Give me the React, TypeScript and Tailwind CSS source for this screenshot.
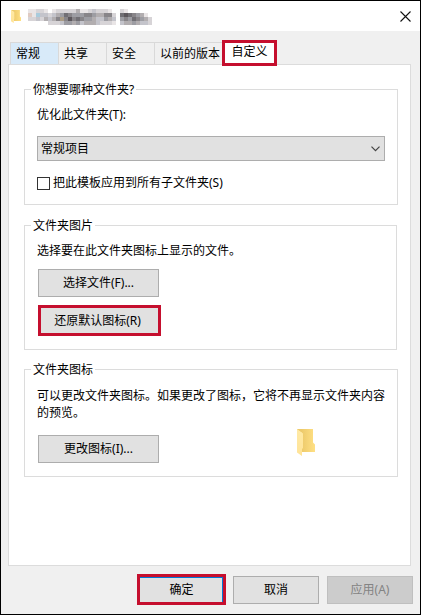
import clsx from "clsx"
import type { ReactNode } from "react"

const tabs = [
  { label: "常规", className: "w-[48px] bg-[#d8eaf9]" },
  { label: "共享", className: "w-[48px]" },
  { label: "安全", className: "w-[48px]" },
  { label: "以前的版本", className: "w-[68px]" },
]

// Pixelated folder name, one digit per block: 0 is white, 9 the darkest
const titleMosaic = [
  "1122101222224112322210021000000",
  "3133323457655566544662078765410",
  "2232434656867655433543056576542",
  "0000022235545344432221034454332",
]

const shades = [
  "#ffffff",
  "#e9e5e6",
  "#d7d4d7",
  "#c4c4cb",
  "#b2aeb0",
  "#9d9da3",
  "#888589",
  "#716f74",
  "#5c575c",
  "#494449",
]

function TitleMosaic() {
  return (
    <svg width="124" height="16" viewBox="0 0 31 4" shapeRendering="crispEdges" aria-hidden="true">
      {titleMosaic.map((row, y) =>
        row.split("").map((shade, x) => (
          <rect key={`${x}-${y}`} x={x} y={y} width="1" height="1" fill={shades[Number(shade)]} />
        )),
      )}
      <rect x="0" y="1" width="1" height="1" fill="#dfcbc3" />
      <rect x="2" y="1" width="1" height="1" fill="#a9cbdc" />
      <rect x="8" y="2" width="1" height="1" fill="#aa9c86" />
    </svg>
  )
}

function FolderIcon({ className }: { className?: string }) {
  return (
    <svg viewBox="0 0 18 27" preserveAspectRatio="none" className={className} aria-hidden="true">
      <defs>
        <linearGradient id="folder-back" x1="0" y1="0" x2="1" y2="0">
          <stop offset="0.25" stopColor="#edca6b" />
          <stop offset="1" stopColor="#ffe084" />
        </linearGradient>
        <linearGradient id="folder-front" x1="0" y1="0" x2="0" y2="1">
          <stop offset="0" stopColor="#ffeaa6" />
          <stop offset="1" stopColor="#ffe397" />
        </linearGradient>
      </defs>
      <path d="M0 0H16V13.5L18 15.5V23H5V4L0 1Z" fill="url(#folder-back)" />
      <path d="M0 0L6 4.5V19L5 20V27L0 23.5Z" fill="url(#folder-front)" />
    </svg>
  )
}

function Group({
  title,
  className,
  children,
}: {
  title: string
  className?: string
  children: ReactNode
}) {
  return (
    <fieldset className={clsx("w-[373px] border border-[#dcdcdc] px-3", className)}>
      <legend className="-ml-1.5 h-[17px] px-[2px] leading-[17px]">{title}</legend>
      {children}
    </fieldset>
  )
}

function Button({ className, children }: { className?: string; children: ReactNode }) {
  return (
    <button
      type="button"
      className={clsx("flex items-center justify-center whitespace-nowrap", className)}
    >
      {children}
    </button>
  )
}

export default function App() {
  return (
    <div className="flex h-[615px] w-[421px] flex-col border border-black bg-[#f0f0f0] font-['Noto_Sans','Noto_Sans_CJK_SC',sans-serif] text-[12px] leading-4 text-black">
      <header className="flex h-[30px] shrink-0 items-center bg-white pr-[9px] pl-[10px]">
        <FolderIcon className="h-[13px] w-[10px]" />
        <div className="ml-[7px] pt-px">
          <TitleMosaic />
        </div>
        <button type="button" aria-label="关闭" className="ml-auto">
          <svg width="11" height="11" viewBox="0 0 11 11" stroke="#111" strokeWidth="1.1">
            <path d="M0.5 0.5L10.5 10.5M10.5 0.5L0.5 10.5" />
          </svg>
        </button>
      </header>

      <nav className="relative z-10 mt-[9px] -mb-[2px] flex h-[26px] shrink-0 pl-[9px]">
        {tabs.map((tab) => (
          <button
            key={tab.label}
            type="button"
            className={clsx(
              "mt-[2px] h-[22px] shrink-0 border-t border-l border-[#d9d9d9] pl-[5px] text-left whitespace-nowrap",
              tab.className,
            )}
          >
            {tab.label}
          </button>
        ))}
        <button
          type="button"
          className="flex h-[26px] w-[55px] justify-center border-3 border-[#c50f2e] bg-white pt-px"
        >
          自定义
        </button>
      </nav>

      <main className="ml-[7px] h-[502px] w-[403px] shrink-0 border border-[#dcdcdc] bg-white pt-[16px] pl-[15px]">
        <Group title="你想要哪种文件夹?" className="h-[124px]">
          <p className="mt-[9px]">优化此文件夹(T):</p>
          <div className="mt-[13px] flex h-[25px] w-[348px] items-center justify-between border border-[#adadad] bg-[#e1e1e1] pr-1 pl-[3px]">
            <span>常规项目</span>
            <svg width="9" height="6" viewBox="0 0 9 6" fill="none" stroke="#444" strokeWidth="1.2">
              <path d="M0.5 0.7L4.5 4.7L8.5 0.7" />
            </svg>
          </div>
          <label className="mt-[14px] flex items-center gap-[3px]">
            <span className="h-[13px] w-[13px] border border-[#333] bg-white" />
            把此模板应用到所有子文件夹(S)
          </label>
        </Group>

        <Group title="文件夹图片" className="mt-[12px] h-[133px]">
          <p className="mt-[9px]">选择要在此文件夹图标上显示的文件。</p>
          <Button className="mt-[10px] ml-px h-[28px] w-[121px] border border-[#adadad] bg-[#e1e1e1]">
            选择文件(F)...
          </Button>
          <Button className="mt-[8px] ml-px h-[31px] w-[123px] border-3 border-[#c50f2e] bg-[#e1e1e1] pr-1">
            还原默认图标(R)
          </Button>
        </Group>

        <Group title="文件夹图标" className="mt-[11px] h-[116px]">
          <p className="mt-[9px] leading-[17px] whitespace-nowrap">
            可以更改文件夹图标。如果更改了图标，它将不再显示文件夹内容
            <br />
            的预览。
          </p>
          <div className="mt-[8px] flex">
            <Button className="mt-[6px] ml-px h-[28px] w-[121px] border border-[#adadad] bg-[#e1e1e1]">
              更改图标(I)...
            </Button>
            <FolderIcon className="ml-[138px] h-[27px] w-[18px]" />
          </div>
        </Group>
      </main>

      <footer className="mt-[8px] ml-[136px] flex items-center">
        <Button className="h-[31px] w-[89px] border-3 border-[#c50f2e] bg-[#e1e1e1] shadow-[inset_-1px_1px_0_#0078d7]">
          确定
        </Button>
        <Button className="ml-[7px] h-[28px] w-[86px] border border-[#adadad] bg-[#e1e1e1]">
          取消
        </Button>
        <Button className="ml-[8px] h-[28px] w-[86px] border border-[#bfbfbf] bg-[#cccccc] text-[#838383]">
          应用(A)
        </Button>
      </footer>
    </div>
  )
}
